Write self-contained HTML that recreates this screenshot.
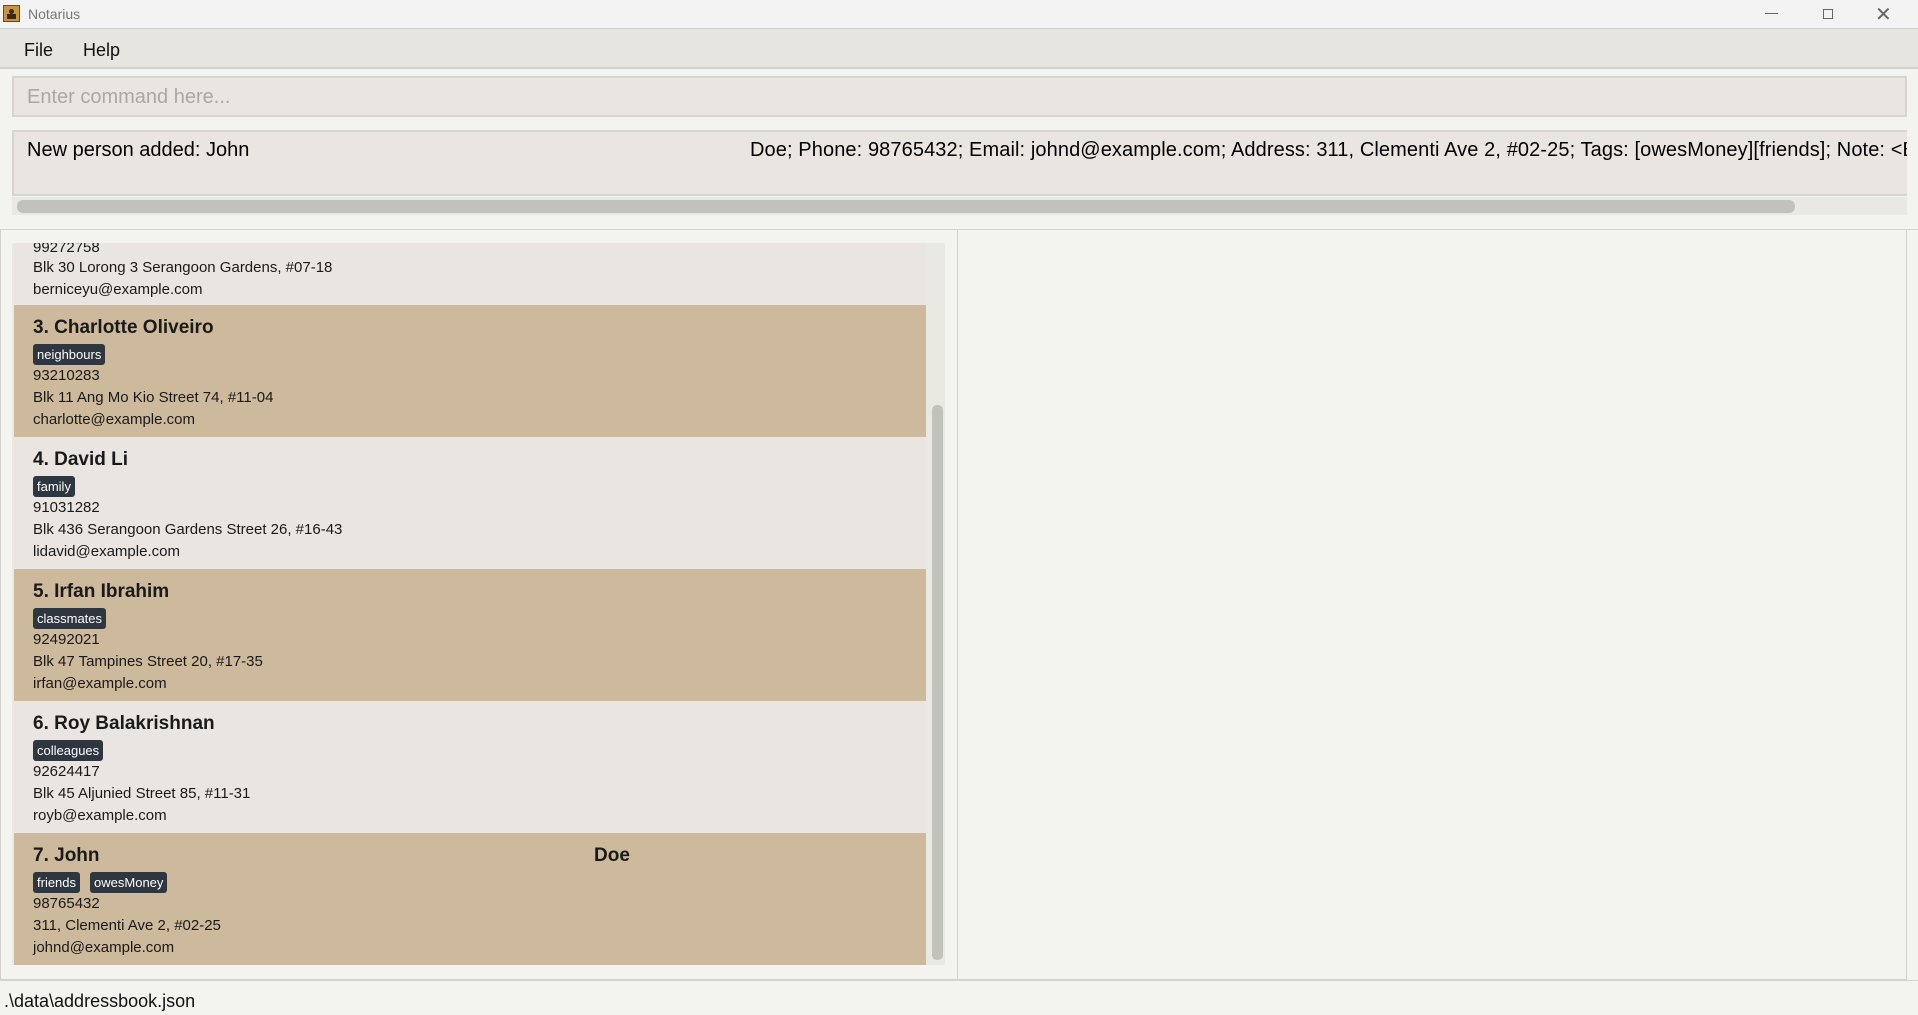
<!DOCTYPE html>
<html><head><meta charset="utf-8"><style>
*{margin:0;padding:0;box-sizing:border-box}
body{width:1918px;height:1015px;overflow:hidden;background:#f3f3ef;font-family:"Liberation Sans",sans-serif;position:relative}
.a{position:absolute}
.title{left:0;top:0;width:1918px;height:29px;background:#f3f3f3;border-bottom:1px solid #cfcfcf}
.menu{left:0;top:29px;width:1918px;height:40px;background:#e6e5e0;border-bottom:2px solid #d2d2ce}
.card{position:absolute;left:14px;width:912px;height:132px;font-family:"Liberation Sans",sans-serif;color:#1a1a1a}
.tan{background:#cdb99b}.lt{background:#eae5e1}
.nm{position:absolute;left:19px;top:12px;font-size:19px;font-weight:bold}
.tags{position:absolute;left:19px;top:39px;display:flex;gap:10px}
.tag{background:#2e3640;color:#fff;font-size:13px;padding:2px 4px;border-radius:3px;height:21px;line-height:17px}
.ln{position:absolute;left:19px;font-size:15px}
</style></head><body>
<div class="a title"></div>
<div class="a" style="left:3px;top:5px;width:17px;height:17px;background:#c8943e;border:1px solid #6b4a1c"><div style="position:absolute;left:5px;top:3px;width:5px;height:5px;background:#3a2a14;border-radius:50%"></div><div style="position:absolute;left:3px;top:8px;width:9px;height:5px;background:#3a2a14"></div></div>
<div class="a" style="left:28px;top:6px;font-size:14px;color:#777">Notarius</div>
<div class="a" style="left:1765px;top:13px;width:13px;height:1px;background:#666"></div>
<div class="a" style="left:1823px;top:9px;width:10px;height:10px;border:1px solid #666"></div>
<div class="a" style="left:1875px;top:2px;font-size:20px;color:#666">✕</div>
<div class="a menu"></div>
<div class="a" style="left:24px;top:40px;font-size:18px;color:#111">File</div>
<div class="a" style="left:83px;top:40px;font-size:18px;color:#111">Help</div>
<div class="a" style="left:12px;top:76px;width:1895px;height:41px;background:#eae5e1;border:2px solid #d7d5d0"></div>
<div class="a" style="left:27px;top:86px;font-size:20px;color:#a8a8a8">Enter command here...</div>
<div class="a" style="left:12px;top:130px;width:1895px;height:66px;background:#eae5e1;border:2px solid #d7d5d0;border-right:none"></div>
<div class="a" style="left:27px;top:139px;font-size:20px;color:#000">New person added: John</div>
<div class="a" style="left:750px;top:139px;width:1157px;overflow:hidden;white-space:nowrap;font-size:20px;color:#000;letter-spacing:0.1px">Doe; Phone: 98765432; Email: johnd@example.com; Address: 311, Clementi Ave 2, #02-25; Tags: [owesMoney][friends]; Note: &lt;B</div>
<div class="a" style="left:12px;top:197px;width:1895px;height:18px;background:#e9e8e3"></div>
<div class="a" style="left:17px;top:200px;width:1778px;height:13px;background:#c2c2bc;border-radius:6px"></div>
<div class="a" style="left:0;top:229px;width:1918px;height:1px;background:#d2d2ce"></div>
<div class="a" style="left:0;top:229px;width:958px;height:751px;border:1px solid #d2d2ce;border-top:none"></div>
<div class="a" style="left:958px;top:229px;width:949px;height:751px;border-right:1px solid #d2d2ce;border-bottom:1px solid #d2d2ce"></div>
<div class="a" style="left:0;top:980px;width:1918px;height:1px;background:#d2d2ce"></div>
<div class="a" style="left:12px;top:243px;width:933px;height:722px;background:#eae8e3;overflow:hidden">
 <div class="card lt" style="top:-70px;left:2px">
  <div class="ln" style="top:66px">99272758</div>
  <div class="ln" style="top:86px">Blk 30 Lorong 3 Serangoon Gardens, #07-18</div>
  <div class="ln" style="top:108px">berniceyu@example.com</div>
 </div>
 <div class="card tan" style="top:62px;left:2px"><div class="nm">3. Charlotte Oliveiro</div><div class="tags"><span class="tag">neighbours</span></div><div class="ln" style="top:62px">93210283</div><div class="ln" style="top:84px">Blk 11 Ang Mo Kio Street 74, #11-04</div><div class="ln" style="top:106px">charlotte@example.com</div></div>
 <div class="card lt" style="top:194px;left:2px"><div class="nm">4. David Li</div><div class="tags"><span class="tag">family</span></div><div class="ln" style="top:62px">91031282</div><div class="ln" style="top:84px">Blk 436 Serangoon Gardens Street 26, #16-43</div><div class="ln" style="top:106px">lidavid@example.com</div></div>
 <div class="card tan" style="top:326px;left:2px"><div class="nm">5. Irfan Ibrahim</div><div class="tags"><span class="tag">classmates</span></div><div class="ln" style="top:62px">92492021</div><div class="ln" style="top:84px">Blk 47 Tampines Street 20, #17-35</div><div class="ln" style="top:106px">irfan@example.com</div></div>
 <div class="card lt" style="top:458px;left:2px"><div class="nm">6. Roy Balakrishnan</div><div class="tags"><span class="tag">colleagues</span></div><div class="ln" style="top:62px">92624417</div><div class="ln" style="top:84px">Blk 45 Aljunied Street 85, #11-31</div><div class="ln" style="top:106px">royb@example.com</div></div>
 <div class="card tan" style="top:590px;left:2px"><div class="nm">7. John</div><div class="nm" style="left:580px">Doe</div><div class="tags"><span class="tag">friends</span><span class="tag">owesMoney</span></div><div class="ln" style="top:62px">98765432</div><div class="ln" style="top:84px">311, Clementi Ave 2, #02-25</div><div class="ln" style="top:106px">johnd@example.com</div></div>
 <div class="a" style="left:918px;top:0;width:15px;height:722px;background:#eae8e3"></div>
 <div class="a" style="left:920px;top:162px;width:11px;height:555px;background:#c2c2bc;border-radius:5px"></div>
</div>
<div class="a" style="left:4px;top:991px;font-size:18px;color:#111">.\data\addressbook.json</div>
</body></html>
